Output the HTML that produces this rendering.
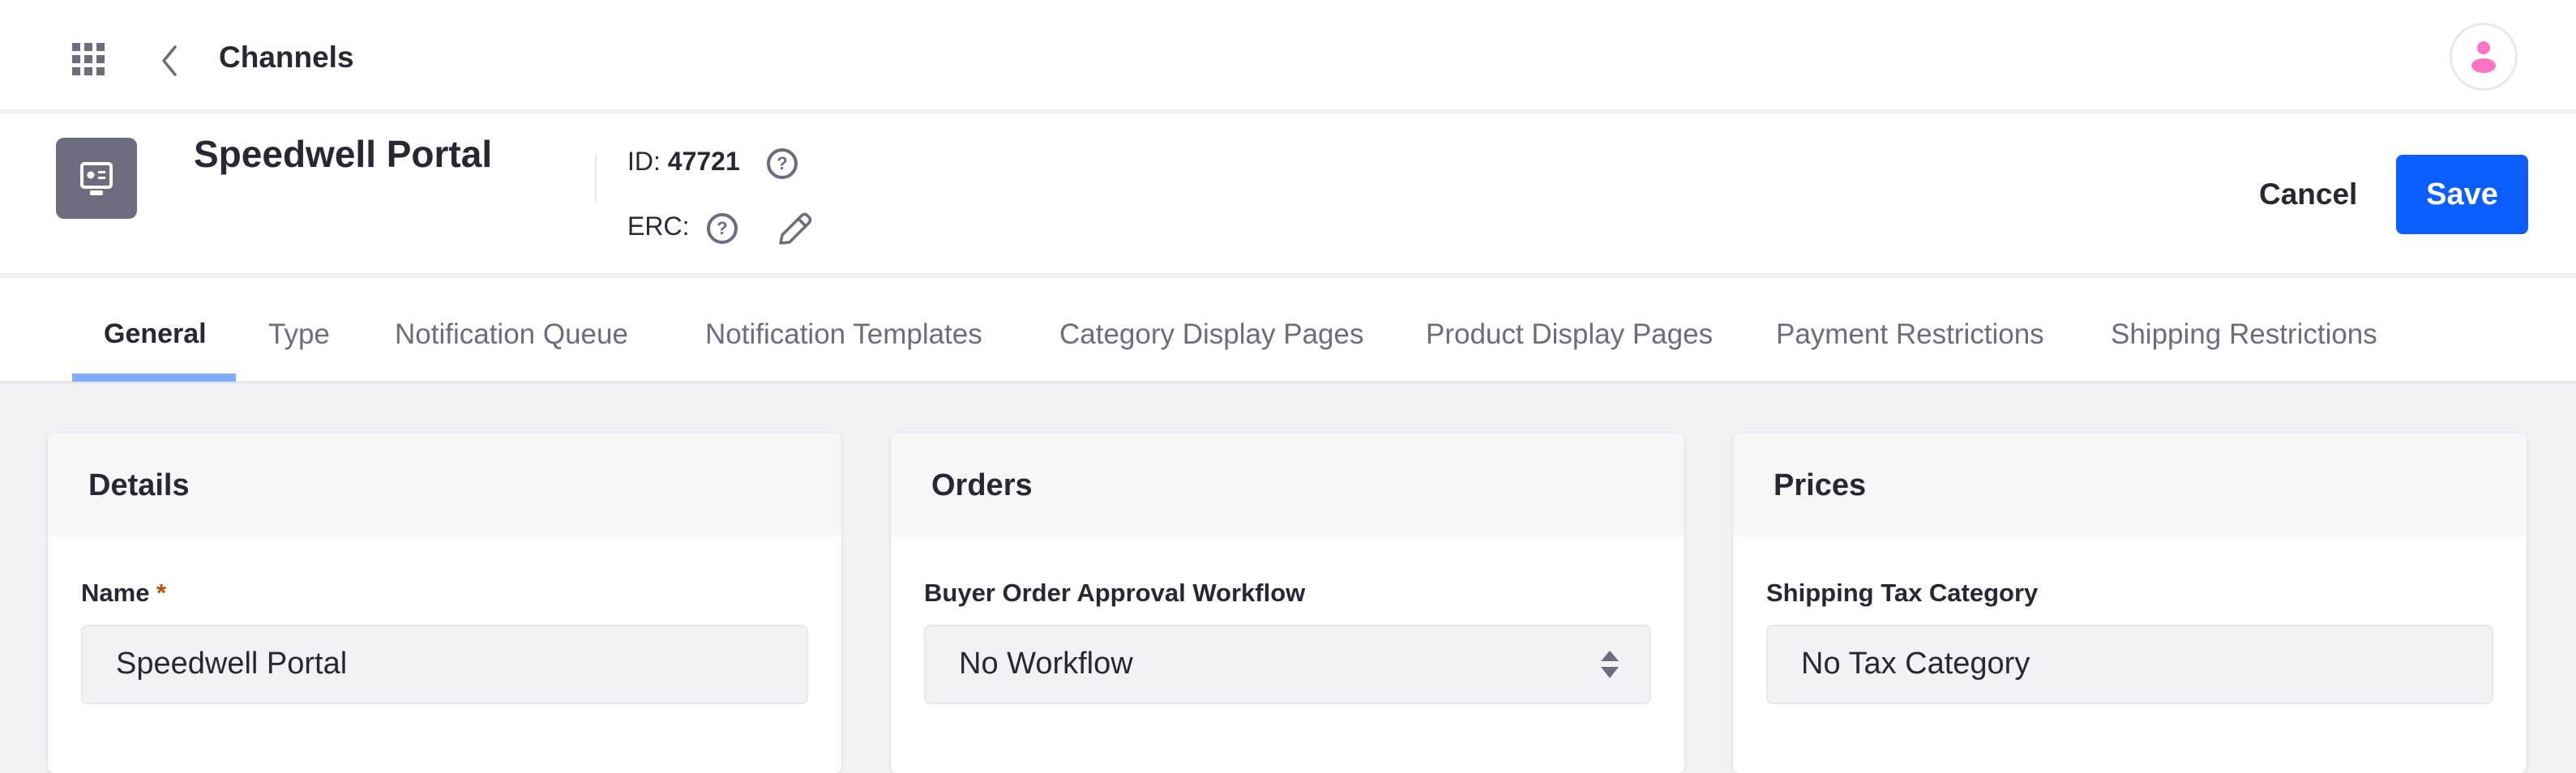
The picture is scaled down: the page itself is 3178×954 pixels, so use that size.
<!DOCTYPE html>
<html><head><meta charset="utf-8"><style>
*{margin:0;padding:0;box-sizing:border-box}
body{width:3178px;height:931px;overflow:hidden;background:#f1f2f5;font-family:"Liberation Sans",sans-serif;color:#272833;position:relative}
.abs{position:absolute}
.top{left:0;top:0;width:3178px;height:138px;background:#fff;border-bottom:3px solid #f0f0f3}
.hdr{left:0;top:141px;width:3178px;height:199px;background:#fff;border-bottom:3px solid #f0f0f3}
.tabs{left:0;top:343px;width:3178px;height:131px;background:#fff;border-bottom:4px solid #e7e7ed}
.tab{position:absolute;top:393px;font-size:35px;color:#6b6c7e;white-space:nowrap}
.card{position:absolute;top:534px;width:979px;height:420px;background:#fff;border-radius:8px;box-shadow:0 1px 4px rgba(0,0,0,.12);overflow:hidden}
.ch{height:128px;background:#f7f7f8;font-weight:bold;font-size:38px;padding:44px 0 0 50px}
.lbl{position:absolute;left:41px;top:180px;font-weight:bold;font-size:31px}
.inp{position:absolute;left:41px;top:237px;width:897px;height:98px;background:#f1f2f5;border:2px solid #e7e7ed;border-radius:8px;font-size:38px;padding:25px 0 0 41px;color:#272833}
.q{position:absolute;width:38px;height:38px;border:4px solid #6b6c7e;border-radius:50%;font-size:22px;font-weight:bold;color:#6b6c7e;text-align:center;line-height:30px}
</style></head><body>
<div class="abs top"></div>
<svg class="abs" style="left:89px;top:53px" width="40" height="40" viewBox="0 0 40 40" fill="#6b6c7e">
<rect x="0" y="0" width="10" height="10"/><rect x="15" y="0" width="10" height="10"/><rect x="30" y="0" width="10" height="10"/>
<rect x="0" y="15" width="10" height="10"/><rect x="15" y="15" width="10" height="10"/><rect x="30" y="15" width="10" height="10"/>
<rect x="0" y="30" width="10" height="10"/><rect x="15" y="30" width="10" height="10"/><rect x="30" y="30" width="10" height="10"/></svg>
<svg class="abs" style="left:196px;top:55px" width="26" height="40" viewBox="0 0 26 40"><path d="M20 3 L6 20 L20 37" fill="none" stroke="#6b6c7e" stroke-width="3.5" stroke-linecap="round" stroke-linejoin="round"/></svg>
<div class="abs" style="left:270px;top:50px;font-size:37px;font-weight:bold;color:#272833">Channels</div>
<div class="abs" style="left:3022px;top:28px;width:84px;height:84px;border:3px solid #e7e7ed;border-radius:50%;background:#fff"></div>
<svg class="abs" style="left:3048px;top:50px" width="32" height="40" viewBox="0 0 32 40" fill="#ff73c3"><circle cx="16" cy="9" r="8"/><ellipse cx="16" cy="31" rx="15" ry="9"/></svg>

<div class="abs hdr"></div>
<div class="abs" style="left:69px;top:170px;width:100px;height:100px;background:#6b6c7e;border-radius:10px"></div>
<svg class="abs" style="left:99px;top:200px" width="40" height="42" viewBox="0 0 40 42"><rect x="2" y="2" width="36" height="29" rx="3" fill="none" stroke="#fff" stroke-width="4"/><circle cx="13" cy="16" r="4.5" fill="#fff"/><rect x="22" y="11" width="9" height="3" fill="#fff"/><rect x="22" y="18" width="9" height="3" fill="#fff"/><rect x="12" y="35" width="16" height="6" rx="2" fill="#fff"/></svg>
<div class="abs" style="left:239px;top:163px;font-size:46px;font-weight:bold">Speedwell Portal</div>
<div class="abs" style="left:734px;top:190px;width:2px;height:60px;background:#e7e7ed"></div>
<div class="abs" style="left:774px;top:181px;font-size:32px">ID: <b>47721</b></div>
<div class="q" style="left:946px;top:183px">?</div>
<div class="abs" style="left:774px;top:261px;font-size:32px">ERC:</div>
<div class="q" style="left:872px;top:263px">?</div>
<svg class="abs" style="left:958px;top:262px" width="44" height="42" viewBox="0 0 44 42"><path d="M5 38 L7 28 L31 4 Q35 1 38 4 L40 6 Q43 9 40 13 L16 37 Z M27 8 L36 17" fill="none" stroke="#6b6c7e" stroke-width="3.5" stroke-linejoin="round"/></svg>
<div class="abs" style="left:2787px;top:219px;font-size:37px;font-weight:bold">Cancel</div>
<div class="abs" style="left:2956px;top:191px;width:163px;height:98px;background:#0b5fff;border-radius:8px;color:#fff;font-size:38px;font-weight:bold;text-align:center;line-height:98px">Save</div>

<div class="abs tabs"></div>
<div class="tab" style="left:128px;color:#272833;font-weight:bold;font-size:34px">General</div>
<div class="tab" style="left:331px">Type</div>
<div class="tab" style="left:487px">Notification Queue</div>
<div class="tab" style="left:870px">Notification Templates</div>
<div class="tab" style="left:1307px">Category Display Pages</div>
<div class="tab" style="left:1759px">Product Display Pages</div>
<div class="tab" style="left:2191px">Payment Restrictions</div>
<div class="tab" style="left:2604px">Shipping Restrictions</div>
<div class="abs" style="left:89px;top:461px;width:202px;height:10px;background:#80acff"></div>

<div class="card" style="left:59px"><div class="ch">Details</div>
<div class="lbl">Name <span style="color:#b95000">*</span></div>
<div class="inp">Speedwell Portal</div></div>
<div class="card" style="left:1099px"><div class="ch">Orders</div>
<div class="lbl">Buyer Order Approval Workflow</div>
<div class="inp">No Workflow</div>
<svg class="abs" style="left:875px;top:268px" width="24" height="36" viewBox="0 0 24 36" fill="#6b6c7e"><path d="M12 1 L23 14 L1 14 Z M1 21 L23 21 L12 35 Z"/></svg></div>
<div class="card" style="left:2138px"><div class="ch">Prices</div>
<div class="lbl">Shipping Tax Category</div>
<div class="inp">No Tax Category</div></div>
</body></html>
